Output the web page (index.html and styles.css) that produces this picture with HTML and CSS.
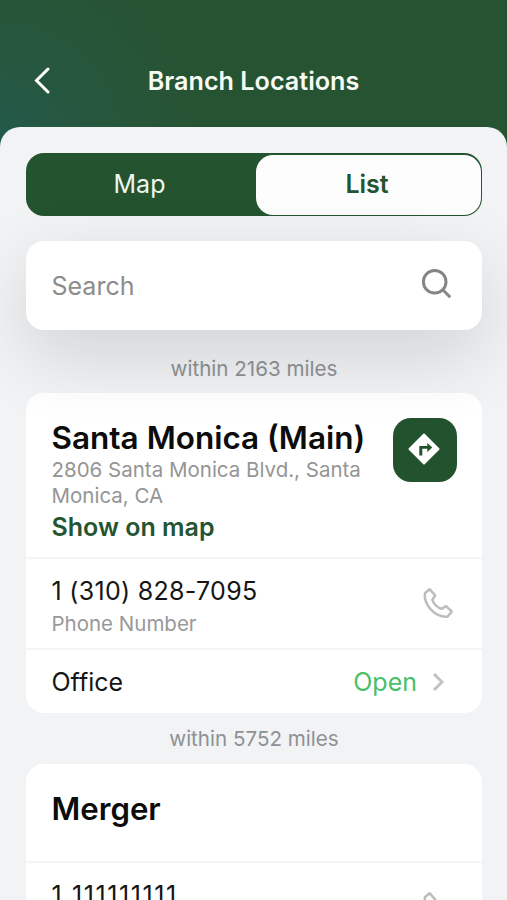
FILE: index.html
```html
<!DOCTYPE html>
<html lang="en">

<head>
	<meta charset="UTF-8">
	<meta name="viewport" content="width=device-width, initial-scale=1.0">
	<title>Branch Locations</title>
	<link rel="stylesheet" href="styles.css">
</head>

<body>
	<header class="header">
		<a class="back">
			<svg width="17" height="28" viewBox="0 0 17 28">
				<path d="M15 2L3.500 13.500l11.500 11.500" />
			</svg>
		</a>
		<h1>Branch Locations</h1>
	</header>

	<main class="sheet">
		<div class="tabs">
			<a class="tab">Map</a>
			<a class="tab active">List</a>
		</div>

		<div class="search">
			<span>Search</span>
			<svg width="32" height="32" viewBox="0 0 32 32">
				<circle cx="13.7" cy="13.7" r="11.3" />
				<path d="M21.8 21.8l7.4 7.4" />
			</svg>
		</div>

		<p class="distance first"><span>within 2163 miles</span></p>
		<section class="card">
			<div class="info">
				<div class="text">
					<h2>Santa Monica (Main)</h2>
					<p class="address">2806 Santa Monica Blvd., Santa<br>Monica, CA</p>
					<a class="show">Show on map</a>
				</div>
				<a class="route">
					<svg width="32" height="32" viewBox="0 0 32 32">
						<path class="sign" d="M16 1.500L30.500 16 16 30.500 1.500 16z" />
						<path class="arrow" d="M11.300 22.500v-9.500h8v-3l5 4.500-5 4.500v-3.200h-5v6.700z" />
					</svg>
				</a>
			</div>
			<div class="row phone">
				<div>
					<p class="number">1 (310) 828-7095</p>
					<p class="label">Phone Number</p>
				</div>
				<svg class="call" width="32" height="32" viewBox="0 0 32 32">
					<path d="M7.500 2.200L2.900 6.200C1.500 18 13 30.500 25.500 29.700L29.800 24.500 24 19.200 19.500 21.800C15.500 20.500 11.200 16.800 10.400 12.700L13.200 8.400z" />
				</svg>
			</div>
			<div class="row office">
				<span class="name">Office</span>
				<span class="open">Open</span>
				<svg width="12" height="20" viewBox="0 0 12 20">
					<path d="M2 2l8 8-8 8" />
				</svg>
			</div>
		</section>

		<p class="distance"><span>within 5752 miles</span></p>
		<section class="card">
			<div class="info short">
				<h2 class="merger">Merger</h2>
			</div>
			<div class="row phone">
				<div>
					<p class="number ones">1 111111111</p>
				</div>
				<svg class="call" width="32" height="32" viewBox="0 0 32 32">
					<path d="M7.500 2.200L2.900 6.200C1.500 18 13 30.500 25.500 29.700L29.800 24.500 24 19.200 19.500 21.800C15.500 20.500 11.200 16.800 10.400 12.700L13.200 8.400z" />
				</svg>
			</div>
		</section>
	</main>
</body>

</html>
```
FILE: styles.css
```css
* {
	margin: 0;
	padding: 0;
	box-sizing: border-box;
}

html,
body {
	width: 100%;
	height: 900px;
	overflow: hidden;
}

body {
	display: flex;
	flex-direction: column;
	font-family: Inter, "Liberation Sans", sans-serif;
	font-size: 25px;
	color: #151515;
	background: radial-gradient(circle at 0 140px, #245a4b 0, #26573f 80px, #265331 210px);
}

svg {
	display: block;
	fill: none;
}

.header {
	display: grid;
	grid-template-columns: 60px 1fr 60px;
	align-items: center;
	flex: none;
	height: 127px;
	padding-top: 34px;
}

.back {
	padding-left: 33px;
}

.back svg {
	stroke: #fff;
	stroke-width: 3;
	stroke-linecap: round;
}

h1 {
	font-size: 25.200px;
	font-weight: 600;
	line-height: 30px;
	text-align: center;
	color: #f6fbf4;
}

.sheet {
	flex: 1;
	min-height: 0;
	padding: 26px 25px 0 26px;
	border-radius: 20px 20px 0 0;
	background: #f1f3f5;
	overflow: hidden;
}

.tabs {
	display: flex;
	height: 63px;
	padding: 1.500px;
	border-radius: 18px;
	background: #245330;
}

.tab {
	width: 228px;
	padding-right: 4px;
	line-height: 59px;
	text-align: center;
	color: #eef7ef;
}

.tab.active {
	flex: 1;
	padding-right: 2px;
	border-radius: 17px;
	font-weight: 600;
	color: #24532f;
	background: #fefdfd;
}

.search {
	display: flex;
	position: relative;
	z-index: 1;
	justify-content: space-between;
	align-items: center;
	height: 89px;
	margin-top: 25px;
	padding: 0 29px 0 25.500px;
	border-radius: 18px;
	color: #8c8c8c;
	background: #fff;
	box-shadow: 0 25px 74px rgba(0, 0, 0, .14);
}

.search svg {
	margin-top: -3px;
	stroke: #858585;
	stroke-width: 3;
}

.distance {
	height: 51px;
	line-height: 51px;
	font-size: 20.600px;
	text-align: center;
	color: #8e9194;
}

.distance.first {
	height: 63px;
	padding-top: 27px;
	line-height: 24px;
}

.card {
	border-radius: 18px;
	background: #fff;
}

.info {
	display: flex;
	justify-content: space-between;
	height: 166px;
	padding: 25px 25px 0 25.500px;
	border-bottom: 2px solid #f4f6f6;
}

.info.short {
	height: 99px;
}

h2 {
	font-size: 31.500px;
	font-weight: 600;
	line-height: 40px;
	white-space: nowrap;
	color: #0c0c0c;
}

.merger {
	font-size: 31.200px;
}

.address {
	margin-top: -1px;
	font-size: 20.500px;
	line-height: 25.500px;
	white-space: nowrap;
	color: #959595;
}

.show {
	display: block;
	margin-top: 2px;
	line-height: 34px;
	font-weight: 600;
	color: #245432;
}

.route {
	display: flex;
	flex: none;
	justify-content: center;
	align-items: center;
	width: 64px;
	height: 64px;
	padding: 0 2px 2px 0;
	border-radius: 18px;
	background: #23532e;
}

.sign {
	fill: #fff;
	stroke: #fff;
	stroke-width: 2;
	stroke-linejoin: round;
}

.arrow {
	fill: #23532e;
}

.row {
	display: flex;
	justify-content: space-between;
	align-items: center;
	padding: 0 28px 0 25.500px;
}

.phone {
	align-items: flex-start;
	height: 91px;
	padding-top: 15px;
	border-bottom: 2px solid #f5f7f7;
}

.number {
	line-height: 35px;
	letter-spacing: .3px;
}

.number.ones {
	line-height: 34px;
	letter-spacing: 1.600px;
}

.label {
	font-size: 20.500px;
	line-height: 29px;
	color: #999;
}

.call {
	margin-top: 13px;
	stroke: #bdbdbd;
	stroke-width: 2.500;
	stroke-linejoin: round;
}

.office {
	height: 63px;
}

.open {
	margin-left: auto;
	color: #48bf68;
}

.office svg {
	margin: 0 10px 0 15px;
	stroke: #c2c2c2;
	stroke-width: 3;
}
```
